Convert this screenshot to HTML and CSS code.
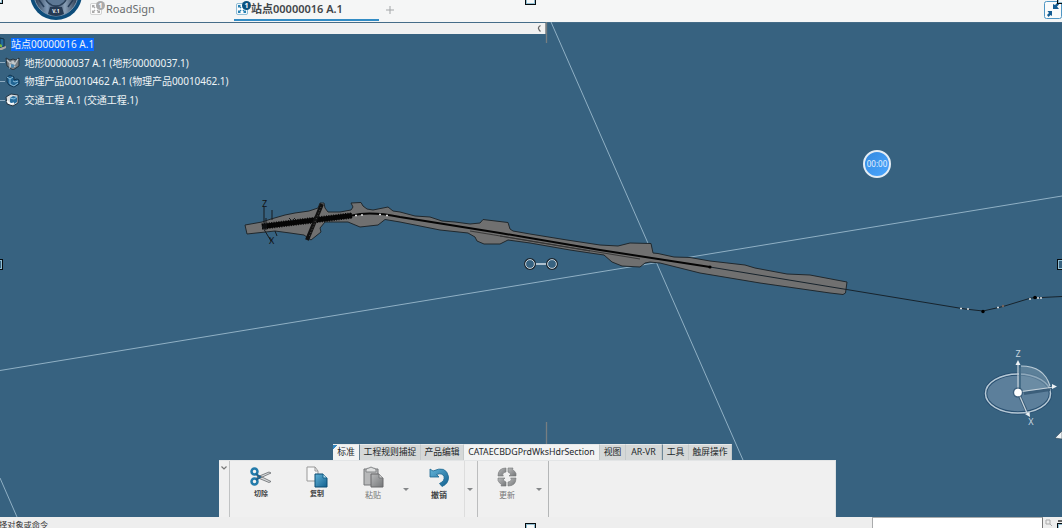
FILE: index.html
```html
<!DOCTYPE html>
<html lang="zh-CN">
<head>
<meta charset="utf-8">
<title>RoadSign</title>
<link rel="stylesheet" href="styles.css">
</head>
<body>
<svg class="defs" width="0" height="0" aria-hidden="true">
  <defs>
    <linearGradient id="blue" x1="0" y1="0" x2="1" y2="1"><stop offset="0" stop-color="#63b3d8"/><stop offset="1" stop-color="#12608f"/></linearGradient>
    <linearGradient id="gray" x1="0" y1="0" x2="1" y2="1"><stop offset="0" stop-color="#b9babb"/><stop offset="1" stop-color="#747678"/></linearGradient>
    <linearGradient id="dial" x1="0" x2="1" y1="0" y2="0"><stop offset="0" stop-color="#25354b"/><stop offset=".3" stop-color="#8099b5"/><stop offset=".5" stop-color="#2c405a"/><stop offset=".7" stop-color="#8ba1b8"/><stop offset="1" stop-color="#25354b"/></linearGradient>
    <symbol id="frame" viewBox="0 0 12 12"><rect x=".6" y=".6" width="10.8" height="10.8" rx="1" fill="#fff" stroke="currentColor" stroke-opacity=".55"/><path d="M2 2h3L4 3l1.500 1.500-1 1L3 4 2 5zM10 2v3L9 4 7.500 5.500l-1-1L8 3 7 2zM2 10V7l1 1 1.500-1.500 1 1L4 9l1 1zM10 10H7l1-1-1.500-1.500 1-1L9 8l1-1z" fill="currentColor"/></symbol>
  </defs>
</svg>
<div class="app">
  <header class="tabs">
    <svg class="dial" width="54" height="22" viewBox="0 0 54 22"><circle cx="27" cy="-6" r="26" fill="#0d4d7b"/><circle cx="27" cy="-6" r="22" fill="url(#dial)" stroke="#7f96ae"/><path d="M10 0l5 7M44 0l-5 7" stroke="#263d58" stroke-width="1.500"/><circle cx="27" cy="-5" r="11" fill="#5d7895" stroke="#2a4059" stroke-width="1.500"/><path d="M21 7h12l2 7q-8 4-16 0z" fill="#263a53"/><text x="27" y="13" text-anchor="middle" class="dial-text">V.1</text></svg>
    <div class="tab tab-road"><svg class="tab-icon" width="12" height="12"><use href="#frame"/></svg><i class="badge">1</i><span>RoadSign</span></div>
    <div class="tab tab-site"><svg class="tab-icon" width="12" height="12"><use href="#frame"/></svg><i class="badge">1</i><span>站点00000016 A.1</span></div>
    <div class="plus"><svg width="8" height="8"><path d="M4 0v8M0 4h8" stroke="#a3a6a8"/></svg></div>
    <svg class="shrink" width="18" height="18" viewBox="0 0 18 18"><rect x=".5" y=".5" width="17" height="17" rx="2" fill="#fafbfb" stroke="#4f96c4"/><path d="M15 3.500l-2 2L15 8H9V3l2 1 2.500-2.500zM3 14l2-2-1.500-2H8v5l-1.500-1-2 2z" fill="#145c92"/></svg>
  </header>

  <main class="viewport">
    <svg class="scene" width="1062" height="495" viewBox="0 22 1062 495">
      <g stroke="#9ab9cc" stroke-width=".9" fill="none"><path d="M551 22 743 460M0 370.500 1062 196M0 478 17 517"/></g>
      <path d="M546.500 22v21M546.500 422v22" stroke="#777e81" stroke-width="1.300"/>
      <path class="road" d="M245 225 262 222 271 219 285 215 295 213 309 211 318 208 320 203 324 203 325 208 328 212 340 212 351 210 353 207 351 203 361 202.500 363 206 367 209 373 210 388 207 393 211 400 212 415 216 430 217 442 221 455 222 470 224 480 223 483 219.500 508 222.500 510 229 513 231 530 234 567 240 600 245 618 246 630 243 651 243.500 653 253 658 253.500 674 257 690 257.500 710 261 745 265 755 268 787 274 810 275 847 282 845.500 293 843 294.500 830 293 760 283 700 273 660 263 650 262 645 263 640 267 622 266 612 262 604 255 590 253 570 250 530 243 508 240 500 244 484 244 477 241 475 237 468 233 440 230 400 222 385 219.500 378 225 360 227 348 222 325 222 320 228 321 232 311 240 304 235 290 233 275 231 247 234Z"/>
      <path d="M262 226.500 352 215.500" stroke="#060606" stroke-width="5"/>
      <path d="M262 226.500 352 215.500" stroke="#060606" stroke-width="6.500" stroke-dasharray="1 1.400"/>
      <path d="M352 215.500Q370 211 400 217L500 233 600 250 710 267" fill="none" stroke="#050505" stroke-width="2"/>
      <path d="M470 231 640 259M500 236 590 251" stroke="#333" stroke-width=".9"/>
      <path d="M710 267 965 309 983 311 1003 306.500 1031 298 1062 296.500" fill="none" stroke="#17232c" stroke-width="1"/>
      <path d="M322 204 307 240" stroke="#111" stroke-width="4"/><path d="M321 207 309 237" stroke="#5b5b5b" stroke-width=".8" stroke-dasharray="1 2"/>
      <g fill="none" stroke="#171b1e"><path d="M264 207v21M272 210v10M262 226l9 15M275 231l2 5M266 218v12M289 218l3 3 3-3"/></g>
      <g class="axis-dark"><text x="262" y="206.500">Z</text><text x="269" y="243.500">X</text></g>
      <path d="M355 215.500h2M361 215h2M379 214.500h2M386 215.500h2M960 308.500h2M967 309h2M997 307.500h2M1029 299h2M1037 298h2M1040 298h2" stroke="#ddd" stroke-width="1.400"/>
      <circle cx="983" cy="311.500" r="1.700"/><circle cx="710" cy="267" r="1.600"/><circle cx="1003" cy="306" r="1.200" fill="#76665f"/><circle cx="1035" cy="297.500" r="1.800"/>
      <path d="M536 264h10" stroke="#adc0ce" stroke-width="2"/><g fill="none"><circle cx="530" cy="264" r="5.200" stroke="#1d252b" stroke-width="1.500"/><circle cx="552" cy="264" r="5.200" stroke="#1d252b" stroke-width="1.500"/><circle cx="530" cy="264" r="4.400" stroke="#d6e0e6" stroke-width=".9"/><circle cx="552" cy="264" r="4.400" stroke="#d6e0e6" stroke-width=".9"/></g>
      <g class="compass">
        <ellipse cx="1018" cy="393.500" rx="32.500" ry="19.500" fill="#5c7f9b" stroke="#284f70" stroke-width="3.500"/><ellipse cx="1018" cy="393.500" rx="32.500" ry="19.500" fill="none" stroke="#b6c9d6" stroke-width="1.500"/>
        <path d="M1021 366Q1044 366 1050 387L1019 392Z" fill="#7595aa" fill-opacity=".6"/><path d="M1021 366Q1044 366 1050 386" fill="none" stroke="#bacbd6" stroke-width="1.200"/>
        <path d="M1020 368v21" fill="none" stroke="#456c87" stroke-width="2"/><path d="M1024 393.500 1050 389.500M1020 397l6 13" stroke="#3b5e7a" stroke-width="3"/>
        <path d="M1018 392V364M1018 392l36-5M1018 392l9 21" stroke="#c7d3db" stroke-width="1.200"/><path d="M1015.500 365 1018 360l2.500 5zM1052 384l5 2.500-5 2.500zM1025 414l4.500-2 .5 5z" fill="#edf2f5"/>
        <circle cx="1018" cy="392.500" r="5.200" fill="#1e405f" fill-opacity=".5"/><circle cx="1018" cy="392.500" r="3.800" fill="#fff"/>
        <text x="1018" y="357" text-anchor="middle">Z</text><text x="1031" y="424.500" text-anchor="middle">X</text>
      </g>
      <path d="M1055 438 1062 431v8z" fill="#edf1f3" stroke="#263946" stroke-width=".5"/>
    </svg>
    <div class="panel-strip"><svg width="4" height="7"><path d="M3.500.5Q1 2 1.500 3.500T3.500 6.500" fill="none" stroke="#666" stroke-width="1.200"/></svg></div>
    <section class="tree">
      <div class="node root"><svg width="7" height="14" viewBox="0 0 7 14"><path d="M0 1l4 1v8H0z" fill="#246a9b" stroke="#122e43"/><path d="M0 7l2 1v2H0" fill="#75b83c"/><path d="M0 11l6-2v2l-4 2H0" fill="#aaa5a0"/></svg><span>站点00000016 A.1</span></div>
      <div class="node"><i></i><svg width="15" height="14" viewBox="0 0 15 14"><path d="M1 2l4 2 3-1 3 1 3-2v8l-6 4-6-4z" fill="#777d82" stroke="#263641"/><path d="M2 4l3 3 3-2 2 3 3-5M5 7v4l3-5 2 5" fill="none" stroke="#c4cacd" stroke-width="1.200"/><path d="M6 8l4 1-2 3-2-1z" fill="#4584af"/></svg><span>地形00000037 A.1 (地形00000037.1)</span></div>
      <div class="node"><i></i><svg width="15" height="14" viewBox="0 0 15 14"><path d="M2 3l3-2 4 2v3l3-1 2 1v4l-5 3-5-2-2-3z" fill="#216593" stroke="#12344e"/><path d="M2 3l3 2 3-2M5 5v5l4 2 4-3M8 7l2 1 3-1" fill="none" stroke="#8abbd9"/></svg><span>物理产品00010462 A.1 (物理产品00010462.1)</span></div>
      <div class="node"><i></i><svg width="15" height="14" viewBox="0 0 15 14"><path d="M1 4l5-3 7 1v8l-5 3-6-2z" fill="#d5dadd" stroke="#243543"/><path d="M5 5l3-2 4 1v5l-3 2-4-1z" fill="#296e9e"/><path d="M5 5l4 1 3-2" fill="none" stroke="#8ec7e5"/><path d="M2 8q3 4 7 2" fill="none" stroke="#fff" stroke-width="1.500"/></svg><span>交通工程 A.1 (交通工程.1)</span></div>
    </section>
    <div class="timer">00:00</div>

    <section class="dock">
      <nav class="ribbon-tabs">
        <span class="on first">标准</span><span class="w60">工程规则捕捉</span><span class="w43">产品编辑</span><span class="on wide">CATAECBDGPrdWksHdrSection</span><span class="w26">视图</span><span class="w36">AR-VR</span><span class="w27 line">工具</span><span class="w43">触屏操作</span>
      </nav>
      <div class="ribbon">
        <div class="grip"><svg width="8" height="4"><path d="M1.500.5 4 3 6.500.5" fill="none" stroke="#777" stroke-width="1.200"/></svg></div>
        <div class="tool cut"><svg width="22" height="22" viewBox="0 0 22 22"><path d="M8 9 21 15.500l-2 1-12-5zM8 13 21 7l-2-1-12 5z" fill="#d8dadb" stroke="#666a6d" stroke-width=".8"/><circle cx="4.500" cy="5.500" r="3" fill="none" stroke="#237bab" stroke-width="2.500"/><circle cx="4.500" cy="15.500" r="3" fill="none" stroke="#237bab" stroke-width="2.500"/><path d="M6 8l4 3-4 3" fill="none" stroke="#1b618c" stroke-width="2"/></svg><b>切除</b></div>
        <div class="tool copy"><svg width="22" height="22" viewBox="0 0 22 22"><path d="M1 1h8l3 4v10H1z" fill="#f8f8f8" stroke="#999"/><path d="M9 1v4h3" fill="none" stroke="#999"/><path d="M9 8h8l4 4v9H9z" fill="url(#blue)" stroke="#0d4d72"/><path d="M17 8v4h4" fill="#b6dcec" stroke="#17658d"/></svg><b>复制</b></div>
        <div class="tool paste"><svg width="22" height="22" viewBox="0 0 22 22"><path d="M2 3h14v16H2z" fill="#b7b8b9" stroke="#747678"/><path d="M4 4q0-2 3-2 2-2 4 0 3 0 3 2v2H4z" fill="#dedfdf" stroke="#858789"/><path d="M9 8h8l4 4v9H9z" fill="url(#gray)" stroke="#68696b"/><path d="M17 8v4h4" fill="#ccc" stroke="#77797a"/></svg><b>粘贴</b></div>
        <div class="drop d1"><i></i></div>
        <div class="tool undo"><svg width="22" height="22" viewBox="0 0 22 22"><path d="M2 3v8h9L8.500 8.500q6-2 7.500 2 1 4.500-4.500 7l2.500 3q7-3 6.500-10Q18-1 5 5z" fill="url(#blue)" stroke="#1b668f" stroke-width=".8"/></svg><b>撤销</b></div>
        <div class="drop d2"><i></i></div>
        <div class="tool update"><svg width="22" height="22" viewBox="0 0 22 22"><g fill="url(#gray)" stroke="#737577" stroke-width=".6"><path d="M2 10q0-8 8-8v4Q7 6 6.500 9l1 1z"/><path d="M12 2h5l-.5 1.500Q19 5 20 7.500V10h-7l2-2-3-2z"/><path d="M20 12q0 8-8 8v-4q3 0 3.500-3l-1-1z"/><path d="M10 20H5l.5-1.500Q3 17 2 14.500V12h7l-2 2 3 2z"/></g></svg><b>更新</b></div>
        <div class="drop d3"><i></i></div>
      </div>
    </section>
  </main>
  <footer class="status"><span>择对象或命令</span><div class="command"></div><svg width="19" height="11"><path d="M3 3h4v4H3zM7 7l2 2" fill="none" stroke="#aaa"/><path d="M15 4h4" stroke="#666" stroke-width="2"/></svg></footer>
  <i class="handle h-tl"></i><i class="handle h-t"></i><i class="handle h-tr"></i><i class="handle h-l"></i><i class="handle h-r"></i><i class="handle h-b"></i><i class="handle h-br"></i>
</div>
</body>
</html>
```
FILE: styles.css
```css
* { box-sizing: border-box; }
body { margin: 0; overflow: hidden; font-family: "Noto Sans", "Noto Sans CJK SC", sans-serif; }
.defs { position: absolute; }
svg { display: block; flex: none; }
i, b { font-style: normal; font-weight: normal; }
.app { position: relative; width: 1062px; height: 528px; display: flex; flex-direction: column; overflow: hidden; }
.tabs { height: 22px; flex: none; display: flex; background: #f5f6f6; padding-left: 29px; }
.dial-text { font-size: 5px; font-weight: bold; fill: #fff; }
.tab { position: relative; display: flex; height: 21px; white-space: nowrap; font-size: 11px; line-height: 18px; color: #696c6e; }
.tab-icon { margin-top: 3px; }
.badge { position: absolute; left: 6px; top: 1px; width: 9px; height: 9px; border-radius: 50%; background: #aaa; color: #fff; font-size: 7px; line-height: 9px; text-align: center; font-weight: bold; }
.tab-road { width: 144px; margin-left: 7px; color: #aaa; }
.tab-road span { color: #696c6e; margin-left: 4px; }
.tab-site { width: 145px; padding-left: 2px; color: #2680b2; border-bottom: 2px solid #328cc5; }
.tab-site span { margin-left: 3px; color: #414549; font-weight: 600; }
.tab-site .badge { left: 8px; background: #0c527f; }
.plus { padding: 6px 0 0 7px; }
.shrink { margin: 1px 0 0 auto; }
.viewport { height: 495px; position: relative; flex: none; background: #376280; border-top: 1px solid #456c88; }
.scene { position: absolute; inset: -1px 0 0; }
.road { fill: #707070; stroke: #20282d; stroke-width: 1; }
.axis-dark { font-size: 9px; fill: #111; }
.compass { font-size: 9px; fill: #c7d5df; }
.panel-strip { position: relative; width: 546px; height: 11px; background: #f1f1f1; display: flex; justify-content: flex-end; align-items: center; padding-right: 4px; border-right: 1px solid #92989b; }
.tree { position: relative; color: #eef3f5; font-size: 10px; padding-top: 1px; width: 260px; }
.node { display: flex; align-items: center; height: 18.600px; white-space: nowrap; }
.node > i { width: 5px; height: 1px; background: #8eabc0; }
.node span { margin-left: 4.500px; line-height: 14px; letter-spacing: -.06px; }
.root span { margin-left: 4px; background: #096bff; line-height: 13px; letter-spacing: 0; }
.timer { position: absolute; left: 863px; top: 127px; width: 28px; height: 28px; border: 2px solid #e5edf4; border-radius: 50%; background: linear-gradient(135deg, #3489df, #4ba7ff); color: #e4f2ff; font-size: 8px; line-height: 24px; text-align: center; }
.dock { position: absolute; left: 219px; bottom: 0; width: 617px; }
.ribbon-tabs { margin-left: 114px; width: 399px; height: 16px; display: flex; background: #d5d8d8; color: #24282b; font-size: 8.800px; line-height: 15px; white-space: nowrap; }
.ribbon-tabs span { flex: none; text-align: center; border-right: 1px solid #c5cacb; border-top: 1px solid #e7e9e9; }
.ribbon-tabs .on { background: #f2f3f3; }
.ribbon-tabs .first { width: 27px; background: linear-gradient(135deg, #3387c1 3px, #f2f3f3 3.500px); border-right-color: #657f91; }
.w60 { width: 61px; }
.w43 { width: 43px; }
.ribbon-tabs .wide { width: 136px; }
.w26 { width: 26px; }
.w36 { width: 36px; }
.w27 { width: 27px; }
.ribbon-tabs .line { border-left: 1px solid #6e8798; }
.ribbon { height: 57px; background: #f0f0f0; display: flex; border-right: 1px solid #dce0e2; border-top: 1px solid #e3e5e6; }
.grip { width: 11px; flex: none; border-right: 1px solid #c1c3c4; padding: 5px 0 0 1px; }
.tool { flex: none; width: 56px; display: flex; flex-direction: column; align-items: center; padding-top: 5px; color: #3f4244; font-size: 7px; line-height: 10px; white-space: nowrap; }
.tool b { margin-top: 1px; font-weight: 600; }
.cut { margin-left: 3px; }
.paste b, .undo b, .update b { font-size: 8px; margin-top: 2px; }
.paste b, .update b { color: #777; font-weight: 400; }
.drop { flex: none; width: 10px; padding-top: 27px; }
.drop i { display: block; width: 0; height: 0; border: 3px solid transparent; border-top-color: #858789; border-bottom: 0; }
.d1 { margin-left: 2px; }
.undo { width: 52px; }
.d2 { width: 14px; margin-left: -1px; padding-left: 2px; border-right: 1px solid #bcbdbe; border-left: 1px solid #ddd; }
.update { width: 58px; }
.d3 { width: 13px; border-right: 1px solid #b4b6b7; }
.status { display: flex; height: 11px; flex: none; background: #eee; color: #333; font-size: 8.200px; line-height: 15px; overflow: hidden; }
.status span { width: 873px; margin-left: -1px; }
.command { width: 171px; height: 12px; background: #fff; border: 1px solid #a9abac; border-right-color: #777; }
.handle { position: absolute; width: 11px; height: 11px; border: 1.500px solid #050b0e; background: #f7f8f8; outline: 0; box-shadow: inset 0 0 0 1px #91bfd3; }
.h-tl { left: -8px; top: -7px; }
.h-t { left: 525px; top: -6px; }
.h-tr { left: 1057px; top: -7px; }
.h-l { left: -8px; top: 259px; }
.h-r { left: 1057px; top: 259px; }
.h-l, .h-r { background: #376280; }
.h-b { left: 525px; top: 523px; }
.h-br { left: 1057px; top: 523px; }
```
